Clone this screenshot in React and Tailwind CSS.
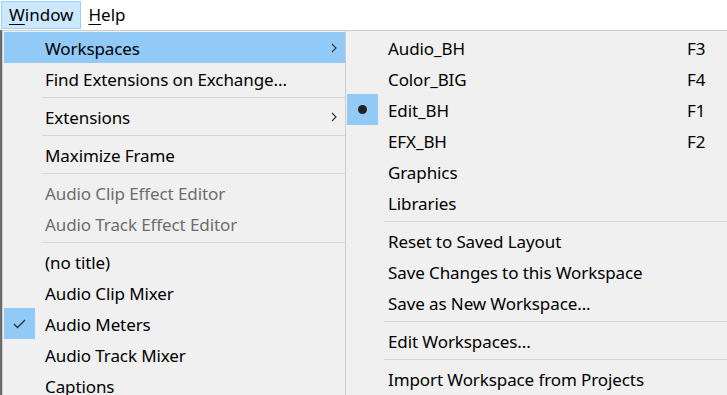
import { useState } from "react";

const font = { fontFamily: '"Segoe UI", "Noto Sans", "Open Sans", sans-serif' };

const mainItems = [
  { label: "Workspaces", sub: true, active: true },
  { label: "Find Extensions on Exchange..." },
  { sep: true },
  { label: "Extensions", sub: true },
  { sep: true },
  { label: "Maximize Frame" },
  { sep: true },
  { label: "Audio Clip Effect Editor", disabled: true },
  { label: "Audio Track Effect Editor", disabled: true },
  { sep: true },
  { label: "(no title)" },
  { label: "Audio Clip Mixer" },
  { label: "Audio Meters", checked: true },
  { label: "Audio Track Mixer" },
  { label: "Captions" },
];

const workspaceItems = [
  { label: "Audio_BH", key: "F3" },
  { label: "Color_BIG", key: "F4" },
  { label: "Edit_BH", key: "F1", bullet: true },
  { label: "EFX_BH", key: "F2" },
  { label: "Graphics" },
  { label: "Libraries" },
  { sep: true },
  { label: "Reset to Saved Layout" },
  { label: "Save Changes to this Workspace" },
  { label: "Save as New Workspace..." },
  { sep: true },
  { label: "Edit Workspaces..." },
  { sep: true },
  { label: "Import Workspace from Projects" },
];

function Chevron() {
  return (
    <svg width="6" height="10" viewBox="0 0 6 10" className="text-[#333]">
      <path d="M1 1l4 4-4 4" fill="none" stroke="currentColor" strokeWidth="1.1" />
    </svg>
  );
}

function Check() {
  return (
    <svg width="13" height="10" viewBox="0 0 13 10" className="text-[#333]">
      <path d="M1 5l3.5 3.5L12 1" fill="none" stroke="currentColor" strokeWidth="1.4" />
    </svg>
  );
}

function Separator({ indent }) {
  return (
    <div className="flex h-[7px] items-center">
      <div className={`h-px flex-1 bg-[#d7d7d7] ${indent}`} />
    </div>
  );
}

function MenuRow({ item, right }) {
  return (
    <div
      className={`flex h-[31px] items-center ${item.active ? "bg-[#91c9f7]" : ""} ${
        item.disabled ? "text-[#6d6d6d]" : "text-black"
      }`}
    >
      <div
        className={`flex h-[31px] w-[31px] shrink-0 items-center justify-center ${
          item.checked || item.bullet ? "bg-[#91c9f7]" : ""
        }`}
      >
        {item.checked && <Check />}
        {item.bullet && <div className="h-[9px] w-[9px] rounded-full bg-[#222]" />}
      </div>
      <span className="ml-[10px] flex-1 whitespace-nowrap pt-[2px] tracking-[-0.1px]">
        {item.label}
      </span>
      {right}
    </div>
  );
}

export default function App() {
  const [open] = useState(true);

  return (
    <div className="h-[395px] w-[727px] overflow-hidden bg-white text-[17px]" style={font}>
      <div className="flex h-[30px] items-stretch bg-white">
        <div className="mt-px ml-px flex h-[28px] items-center border border-[#99d1ff] bg-[#cce8ff] px-[7px]">
          <span>
            <span className="underline underline-offset-[3px]">W</span>indow
          </span>
        </div>
        <div className="flex items-center px-[7px]">
          <span>
            <span className="underline underline-offset-[3px]">H</span>elp
          </span>
        </div>
      </div>

      {open && (
        <div className="flex">
          <div className="w-[2px] shrink-0 bg-[#6b6b6b]" />
          <div className="w-[343px] shrink-0 border-t border-l border-[#cccccc] bg-[#f0f0f0] pt-[1px] pl-px">
            {mainItems.map((it, i) =>
              it.sep ? (
                <Separator key={i} indent="ml-[38px]" />
              ) : (
                <MenuRow
                  key={i}
                  item={it}
                  right={
                    it.sub ? (
                      <div className="mr-[8px] flex items-center">
                        <Chevron />
                      </div>
                    ) : null
                  }
                />
              )
            )}
          </div>
          <div className="flex-1 border-t border-l border-[#cccccc] bg-[#f0f0f0] pt-[1px] pl-px">
            {workspaceItems.map((it, i) =>
              it.sep ? (
                <Separator key={i} indent="ml-[37px]" />
              ) : (
                <MenuRow
                  key={i}
                  item={it}
                  right={
                    it.key ? (
                      <span className="w-[40px] shrink-0 pt-[2px]">{it.key}</span>
                    ) : null
                  }
                />
              )
            )}
          </div>
        </div>
      )}
    </div>
  );
}
